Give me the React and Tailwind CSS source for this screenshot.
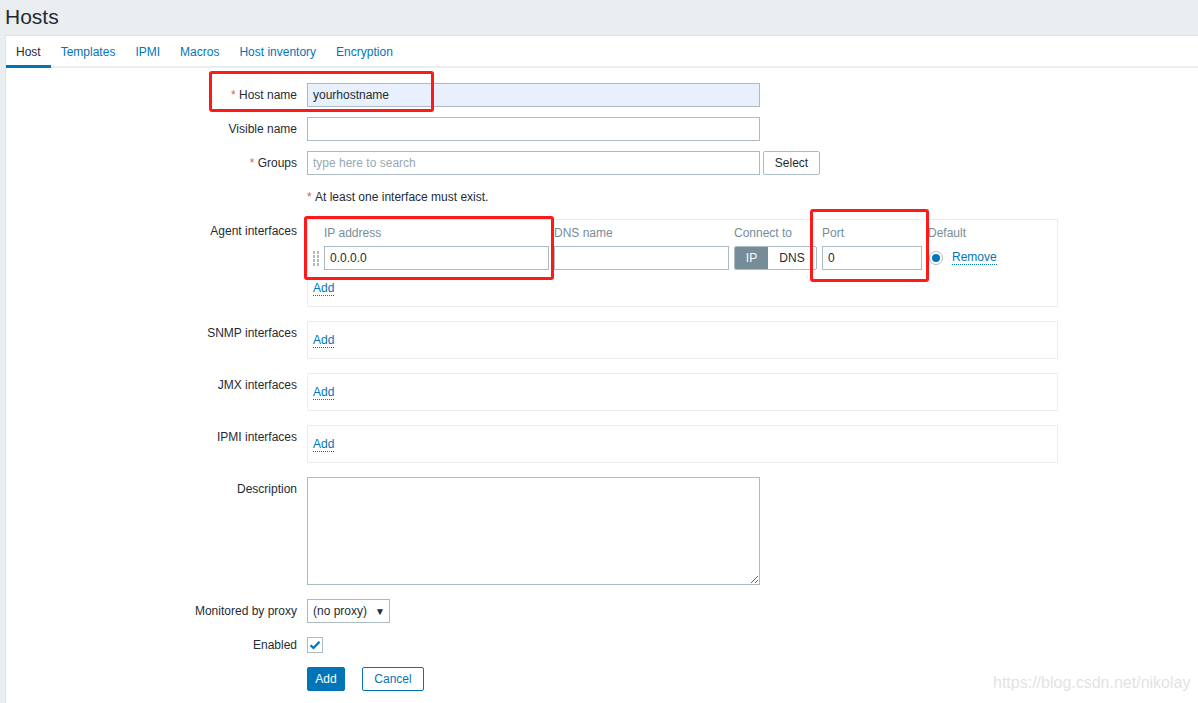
import React from 'react';

const tabs = ['Host', 'Templates', 'IPMI', 'Macros', 'Host inventory', 'Encryption'];

const Label = ({ children, required }) => (
    <div className="w-[291px] shrink-0 text-right pt-[5px] leading-[14px] text-[#1f2c33]">
        {required && <span className="text-[#e45959]">* </span>}
        {children}
    </div>
);

const Row = ({ label, required, className = 'mb-[10px]', children }) => (
    <div className={`flex items-start ${className}`}>
        <Label required={required}>{label}</Label>
        <div className="ml-[10px]">{children}</div>
    </div>
);

const AddLink = () => (
    <span className="text-[#0275b8] border-b border-dotted border-[#0275b8] leading-[13px] inline-block">Add</span>
);

const TextInput = ({ value, placeholder, className = '' }) => (
    <div className={`h-[24px] border border-[#acbbc2] flex items-center px-[5px] ${className}`}>
        {value ? <span className="text-[#1f2c33]">{value}</span> : <span className="text-[#9aa8af]">{placeholder}</span>}
    </div>
);

const EmptyInterface = () => (
    <div className="w-[751px] h-[38px] border border-[#ebeef0] pl-[5px] pt-[11px] leading-[14px]">
        <AddLink />
    </div>
);

const DragHandle = () => (
    <div className="grid grid-cols-2 gap-x-[1px] gap-y-[1px] w-[6px]">
        {Array.from({ length: 8 }).map((_, i) => (
            <div key={i} className="w-[2px] h-[3px] bg-[#acbbc2]" />
        ))}
    </div>
);

export default function App() {
    return (
        <div className="relative min-h-[703px] bg-[#ebeef0] text-[12px] text-[#1f2c33] font-['Liberation_Sans',Arial,sans-serif] overflow-hidden">
            {/* Header */}
            <div className="h-[35px] px-[5px] flex items-center">
                <h1 className="text-[21px] leading-none text-[#1f2c33] -mt-[3px]">Hosts</h1>
            </div>

            {/* Panel */}
            <div className="ml-[5px] bg-white border-t border-l border-[#dfe4e7] min-h-[668px]">
                <nav className="flex h-[32px] border-b-2 border-[#ebeef0]">
                    {tabs.map((t, i) => (
                        <div
                            key={t}
                            className={`px-[10px] flex items-center -mb-[2px] ${i === 0 ? 'text-[#1f2c33] border-b-[3px] border-[#0275b8]' : 'text-[#0275b8] border-b-[3px] border-transparent'}`}
                        >
                            <span className="mt-[3px]">{t}</span>
                        </div>
                    ))}
                </nav>

                <div className="pt-[15px]">
                    <Row label="Host name" required>
                        <TextInput value="yourhostname" className="w-[453px] bg-[#e8f0fe]" />
                    </Row>
                    <Row label="Visible name">
                        <TextInput className="w-[453px]" />
                    </Row>
                    <Row label="Groups" required>
                        <div className="flex gap-[3px]">
                            <TextInput placeholder="type here to search" className="w-[453px]" />
                            <div className="h-[24px] w-[57px] border border-[#acbbc2] rounded-[2px] flex items-center justify-center text-[#1f2c33]">Select</div>
                        </div>
                    </Row>
                    <Row label="">
                        <div className="h-[24px] flex items-center">
                            <span className="text-[#e45959]">*&nbsp;</span>At least one interface must exist.
                        </div>
                    </Row>

                    <Row label="Agent interfaces" className="mb-[14px]">
                        <div className="w-[751px] border border-[#ebeef0] pl-[5px] pt-[6px] pb-[10px]">
                            <div className="grid grid-cols-[6px_225px_175px_83px_100px_auto] gap-x-[5px] leading-[14px] text-[#768d99]">
                                <div />
                                <div>IP address</div>
                                <div>DNS name</div>
                                <div>Connect to</div>
                                <div>Port</div>
                                <div className="ml-[1px]">Default</div>
                            </div>
                            <div className="grid grid-cols-[6px_225px_175px_83px_100px_auto] gap-x-[5px] mt-[6px] items-center">
                                <DragHandle />
                                <TextInput value="0.0.0.0" />
                                <TextInput />
                                <div className="h-[24px] flex border border-[#acbbc2] rounded-[2px] overflow-hidden">
                                    <div className="w-[33px] bg-[#768d99] text-white flex items-center justify-center">IP</div>
                                    <div className="flex-1 flex items-center justify-center text-[#1f2c33]">DNS</div>
                                </div>
                                <TextInput value="0" />
                                <div className="flex items-center">
                                    <div className="w-[14px] h-[14px] rounded-full border border-[#acbbc2] flex items-center justify-center ml-[2px]">
                                        <div className="w-[8px] h-[8px] rounded-full bg-[#0275b8]" />
                                    </div>
                                    <span className="ml-[9px] text-[#0275b8] border-b border-dotted border-[#0275b8] leading-[13px]">Remove</span>
                                </div>
                            </div>
                            <div className="mt-[11px] leading-[14px]">
                                <AddLink />
                            </div>
                        </div>
                    </Row>

                    <Row label="SNMP interfaces" className="mb-[14px]">
                        <EmptyInterface />
                    </Row>
                    <Row label="JMX interfaces" className="mb-[14px]">
                        <EmptyInterface />
                    </Row>
                    <Row label="IPMI interfaces" className="mb-[14px]">
                        <EmptyInterface />
                    </Row>

                    <Row label="Description" className="mb-[14px]">
                        <textarea className="block w-[453px] h-[108px] border border-[#acbbc2] outline-none" defaultValue="" />
                    </Row>

                    <Row label="Monitored by proxy">
                        <div className="h-[24px] w-[83px] border border-[#acbbc2] flex items-center pl-[5px] text-[#1f2c33]">
                            <span>(no proxy)</span>
                            <span className="ml-[8px] text-[10px]">▼</span>
                        </div>
                    </Row>

                    <Row label="Enabled">
                        <div className="h-[24px] flex items-center">
                            <div className="w-[16px] h-[16px] border border-[#acbbc2] flex items-center justify-center">
                                <svg width="12" height="10" viewBox="0 0 12 10">
                                    <path d="M1.5 5.2 L4.5 8 L10.5 1.8" fill="none" stroke="#0275b8" strokeWidth="2.2" />
                                </svg>
                            </div>
                        </div>
                    </Row>

                    <Row label="">
                        <div className="flex gap-[17px]">
                            <div className="h-[24px] w-[38px] bg-[#0275b8] border border-[#0275b8] rounded-[2px] text-white flex items-center justify-center">Add</div>
                            <div className="h-[24px] w-[62px] bg-white border border-[#0275b8] rounded-[2px] text-[#0275b8] flex items-center justify-center">Cancel</div>
                        </div>
                    </Row>
                </div>
            </div>

            {/* annotation boxes */}
            <div className="absolute left-[209px] top-[71px] w-[225px] h-[41px] border-[3px] border-[#ff1a1a] rounded-[3px]" />
            <div className="absolute left-[304px] top-[216px] w-[250px] h-[64px] border-[3px] border-[#ff1a1a] rounded-[3px]" />
            <div className="absolute left-[810px] top-[209px] w-[119px] h-[73px] border-[3px] border-[#ff1a1a] rounded-[3px]" />

            {/* watermark */}
            <div className="absolute left-[993px] top-[674px] text-[16px] text-[#e3e3e3] leading-[18px]">https://blog.csdn.net/nikolay</div>
        </div>
    );
}
